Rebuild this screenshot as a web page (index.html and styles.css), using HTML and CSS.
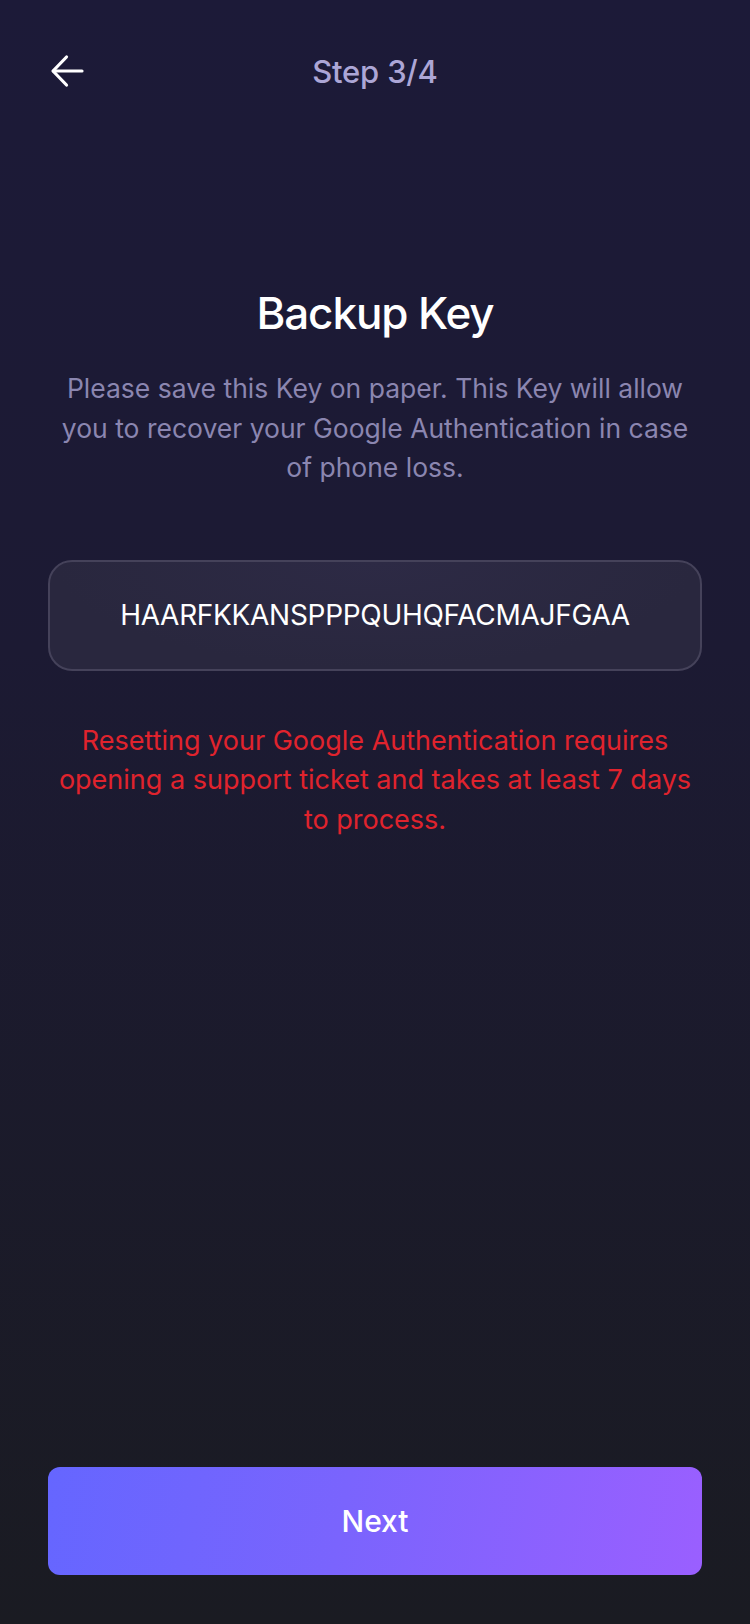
FILE: index.html
```html
<!DOCTYPE html>
<html lang="en">
<head>
<meta charset="utf-8">
<title>Backup Key</title>
<link rel="stylesheet" href="styles.css">
</head>
<body>
<div class="screen">
  <header class="topbar">
    <button class="back" aria-label="Back">
      <svg width="34" height="34" viewBox="0 0 34 34" fill="none" stroke="#ffffff" stroke-width="3.2" stroke-linecap="round" stroke-linejoin="round">
        <path d="M32 17H3.5"/>
        <path d="M16.5 3L3 17L16.5 31"/>
      </svg>
    </button>
    <div class="step">Step 3/4</div>
  </header>
  <main class="content">
    <h1 class="title">Backup Key</h1>
    <p class="desc">Please save this Key on paper. This Key will allow you to recover your Google Authentication in case of phone loss.</p>
    <div class="keybox">HAARFKKANSPPPQUHQFACMAJFGAA</div>
    <p class="warn">Resetting your Google Authentication requires opening a support ticket and takes at least 7 days to process.</p>
  </main>
  <footer class="bottom">
    <button class="next">Next</button>
  </footer>
</div>
</body>
</html>
```
FILE: styles.css
```css
* { box-sizing: border-box; }
html, body { margin: 0; padding: 0; }
body {
  width: 750px;
  height: 1624px;
  font-family: Inter, "Noto Sans", sans-serif;
  background: linear-gradient(180deg, #1c1a38 0%, #1c1a33 40%, #1a1b22 100%);
  color: #fff;
}
.screen {
  height: 1624px;
  display: flex;
  flex-direction: column;
  padding: 0 48px;
}
.topbar {
  position: relative;
  height: 142px;
  display: flex;
  align-items: center;
  justify-content: center;
}
.back {
  position: absolute;
  left: 2px;
  top: 54px;
  width: 34px;
  height: 34px;
  padding: 0;
  border: 0;
  background: none;
}
.back svg { display: block; }
.step {
  font-size: 31px;
  font-weight: 500;
  color: #aca6d6;
  letter-spacing: -0.2px;
}
.content {
  flex: 1;
  display: flex;
  flex-direction: column;
  align-items: center;
  padding-top: 145px;
}
.title {
  margin: 0;
  font-size: 44px;
  font-weight: 500;
  line-height: 52px;
  letter-spacing: -1.1px;
}
.desc {
  margin: 30px 0 0;
  text-align: center;
  font-size: 26.5px;
  line-height: 39.5px;
  color: #8b86b0;
}
.keybox {
  margin-top: 72px;
  width: 100%;
  height: 111px;
  flex: none;
  border: 2px solid #45425a;
  border-radius: 24px;
  background: radial-gradient(ellipse at 50% 0%, #2d2a45 0%, #29273e 70%);
  display: flex;
  align-items: center;
  justify-content: center;
  font-size: 28px;
  color: #fff;
  letter-spacing: -0.3px;
}
.warn {
  margin: 50px 0 0;
  text-align: center;
  font-size: 27px;
  line-height: 39.5px;
  color: #e0232d;
}
.bottom {
  padding-bottom: 49px;
}
.next {
  display: block;
  width: 100%;
  height: 108px;
  border: 0;
  border-radius: 12px;
  background: linear-gradient(100deg, #6566ff 0%, #7a64fd 45%, #9a5fff 100%);
  color: #fff;
  font-family: Inter, "Noto Sans", sans-serif;
  font-size: 30px;
  font-weight: 500;
}
```
